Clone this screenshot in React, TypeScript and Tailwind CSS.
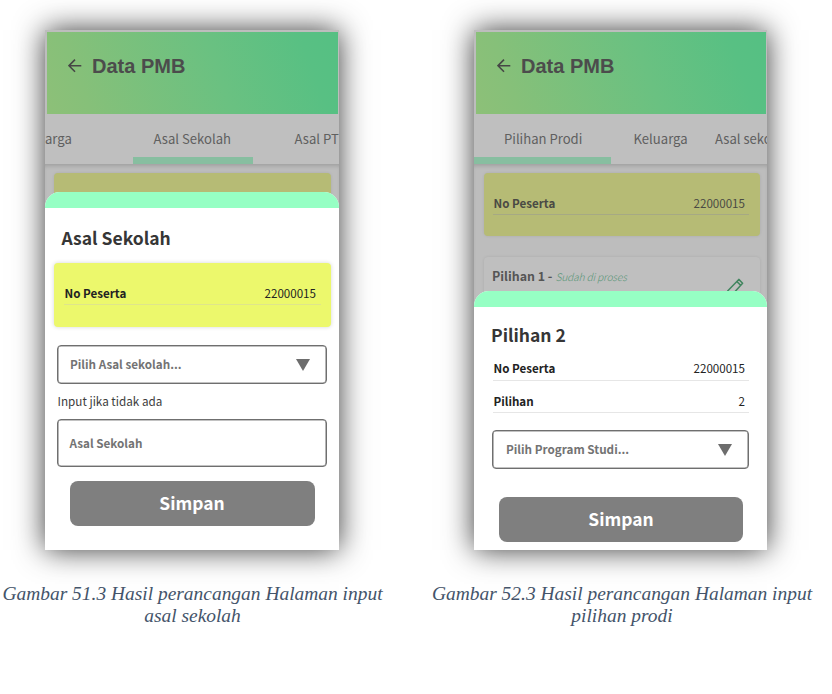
import type { ReactNode } from "react";

function Header() {
  return (
    <div className="mr-[1.5px] ml-[2px] mt-[2px] flex h-[82px] shrink-0 items-start bg-[linear-gradient(70deg,#8dc078_0%,#86c079_14%,#6ac181_58%,#58c083_88%,#55c083_100%)] pl-[20.5px] pt-[23px]">
      <svg className="mt-[3px]" width="14" height="16" viewBox="0 0 14 16" fill="none" stroke="#464646" strokeWidth="1.6">
        <path d="M13.3 7.7H1.3M7 1.6L1 7.7L7 13.8" />
      </svg>
      <h1 className="ml-[10.5px] font-['Liberation_Sans',sans-serif] text-[20px] leading-[22px] font-bold text-[#4c4c4c]">
        Data PMB
      </h1>
    </div>
  );
}

function TabBar({ tabs, underline }: { tabs: ReactNode; underline: ReactNode }) {
  return (
    <div className="flex h-[50px] shrink-0 flex-col overflow-hidden bg-[#bfbfbf]">
      <div className="flex h-[43px] text-[13.1px] leading-[49px] whitespace-nowrap text-[#606060]">{tabs}</div>
      {underline}
    </div>
  );
}

function Row({ label, value, className }: { label: string; value: string; className: string }) {
  return (
    <div className={`flex items-start justify-between border-b text-[11.6px] leading-[18px] ${className}`}>
      <span className="pl-[0.5px] font-bold">{label}</span>
      <span>{value}</span>
    </div>
  );
}

function Select({ children, className }: { children: string; className: string }) {
  return (
    <div className={`flex items-center justify-between rounded-[4px] border border-[#6f6f6f] shadow-[inset_0_0_0_0.6px_#858585] text-[11.7px] leading-[18px] font-bold text-[#737373] ${className}`}>
      <span className="-mt-px">{children}</span>
      <svg width="14" height="12" viewBox="0 0 14 12" fill="#6d6d6d">
        <path d="M0 0H14L7 12Z" />
      </svg>
    </div>
  );
}

function Button({ className }: { className: string }) {
  return (
    <button className={`flex h-[45px] shrink-0 justify-center rounded-[8px] bg-[#7f7f7f] text-[17.4px] leading-[44px] font-bold text-white ${className}`}>
      Simpan
    </button>
  );
}

function Sheet({ children, className }: { children: ReactNode; className: string }) {
  return (
    <div className={`absolute inset-x-0 bottom-0 flex flex-col overflow-hidden rounded-t-[15px] bg-white ${className}`}>
      <div className="h-[16px] shrink-0 bg-[#96ffc4]" />
      {children}
    </div>
  );
}

function Phone({ children, className }: { children: ReactNode; className: string }) {
  return (
    <div className={`h-[520px] shadow-[0_0_28px_rgba(0,0,0,0.78)] ${className}`}>
      <div className="relative flex h-full flex-col overflow-hidden bg-[#bdbdbd]">{children}</div>
    </div>
  );
}

export default function App() {
  return (
    <main className="flex h-[694px] w-[832px] items-start overflow-hidden bg-white pt-[30px] font-['Noto_Sans_CJK_SC',sans-serif]">
      <figure className="w-[385px] shrink-0">
        <Phone className="ml-[45px] w-[294px]">
          <Header />
          <TabBar
            tabs={
              <>
                <span className="w-[108.5px] shrink-0">arga</span>
                <span className="w-[141px] shrink-0">Asal Sekolah</span>
                <span className="shrink-0">Asal PT</span>
              </>
            }
            underline={<div className="ml-[87.5px] h-[7px] w-[120px] bg-[#87bea0]" />}
          />
          <div className="flex-1 px-[9px] pt-[9px] pr-[8px] shadow-[inset_0_4px_4px_-2px_rgba(0,0,0,0.16)]">
            <div className="h-[64px] rounded-[4px] bg-[#b6bb75] shadow-[0_0_3px_rgba(0,0,0,0.1)]" />
          </div>
          <Sheet className="h-[358px]">
            <h2 className="mt-[17px] ml-[16.5px] text-[17.5px] leading-[26px] font-bold text-[#363636]">Asal Sekolah</h2>
            <div className="mt-[12px] mr-[8px] ml-[9px] h-[64px] shrink-0 rounded-[4px] bg-[#ecf86c] pt-[21px] pr-[10px] pl-[10px] shadow-[0_0_4px_rgba(0,0,0,0.17)]">
              <Row label="No Peserta" value="22000015" className="h-[21px] border-[#dfe58b] pr-[5px] text-[#222]" />
            </div>
            <Select className="mt-[18px] mr-[12px] ml-[12px] h-[39px] shrink-0 pr-[16px] pl-[12px]">Pilih Asal sekolah...</Select>
            <p className="mt-[8px] ml-[12.5px] text-[11.7px] leading-[18px] text-[#3d3d3d]">Input jika tidak ada</p>
            <div className="mt-[9px] mr-[12px] ml-[12px] flex h-[48px] shrink-0 items-center rounded-[4px] border border-[#6f6f6f] pl-[11.5px] text-[11.7px] leading-[18px] font-bold text-[#737373] shadow-[inset_0_0_0_0.6px_#858585]">
              Asal Sekolah
            </div>
            <Button className="mt-[14px] ml-[24.5px] w-[245px]" />
          </Sheet>
        </Phone>
        <figcaption className="mt-[33px] text-center font-['Liberation_Serif',serif] text-[19.45px] leading-[22px] whitespace-nowrap text-[#44546a] italic">
          Gambar 51.3 Hasil perancangan Halaman input
          <br />
          asal sekolah
        </figcaption>
      </figure>

      <figure className="ml-[44px] w-[386px] shrink-0">
        <Phone className="ml-[45px] w-[293px]">
          <Header />
          <TabBar
            tabs={
              <>
                <span className="ml-[30px] w-[129.5px] shrink-0">Pilihan Prodi</span>
                <span className="w-[81.5px] shrink-0">Keluarga</span>
                <span className="shrink-0">Asal sekolah</span>
              </>
            }
            underline={<div className="h-[7px] w-[137px] bg-[#87bea0]" />}
          />
          <div className="flex-1 px-[9.5px] pt-[9px] pr-[7.5px] shadow-[inset_0_4px_4px_-2px_rgba(0,0,0,0.16)]">
            <div className="h-[63px] rounded-[4px] bg-[#b6bb75] pt-[21px] pr-[10.5px] pl-[9.5px] shadow-[0_0_3px_rgba(0,0,0,0.1)]">
              <Row label="No Peserta" value="22000015" className="h-[21px] border-[#a6a984] pr-[4px] text-[#4a4a44]" />
            </div>
            <div className="mt-[21px] flex h-[80px] items-start justify-between rounded-[4px] bg-[#bfbfbf] pt-[10px] pr-[16px] pl-[8.5px] shadow-[0_0_3px_rgba(0,0,0,0.1)]">
              <p className="flex items-baseline text-[12.4px] leading-[18px] font-bold whitespace-nowrap text-[#555]">
                Pilihan 1 -
                <span className="ml-[3px] text-[10.3px] font-light tracking-[-0.2px] text-[#5a9678] italic">Sudah di proses</span>
              </p>
              <svg className="mt-[11px]" width="17" height="18" viewBox="0 0 17 18" fill="none" stroke="#41855f" strokeWidth="1.5" strokeLinejoin="round">
                <path d="M0.6 13L11.8 1.4L15.6 5.2L5.4 16.4L0.6 17ZM10 3.6L13.4 7" />
              </svg>
            </div>
          </div>
          <Sheet className="h-[259px]">
            <h2 className="mt-[15px] ml-[17px] text-[17.5px] leading-[26px] font-bold text-[#363636]">Pilihan 2</h2>
            <div className="mr-[18px] ml-[19px]">
              <Row label="No Peserta" value="22000015" className="mt-[11px] h-[22px] border-[#e6e6e6] pr-[4px] text-[#222]" />
              <Row label="Pilihan" value="2" className="mt-[11px] h-[21px] border-[#e6e6e6] pr-[4px] text-[#222]" />
            </div>
            <Select className="mt-[17px] mr-[18.5px] ml-[18px] h-[39px] shrink-0 pr-[16px] pl-[13px]">Pilih Program Studi...</Select>
            <Button className="mt-[28px] ml-[25px] w-[244px]" />
          </Sheet>
        </Phone>
        <figcaption className="mt-[33px] text-center font-['Liberation_Serif',serif] text-[19.45px] leading-[22px] whitespace-nowrap text-[#44546a] italic">
          Gambar 52.3 Hasil perancangan Halaman input
          <br />
          pilihan prodi
        </figcaption>
      </figure>
    </main>
  );
}
